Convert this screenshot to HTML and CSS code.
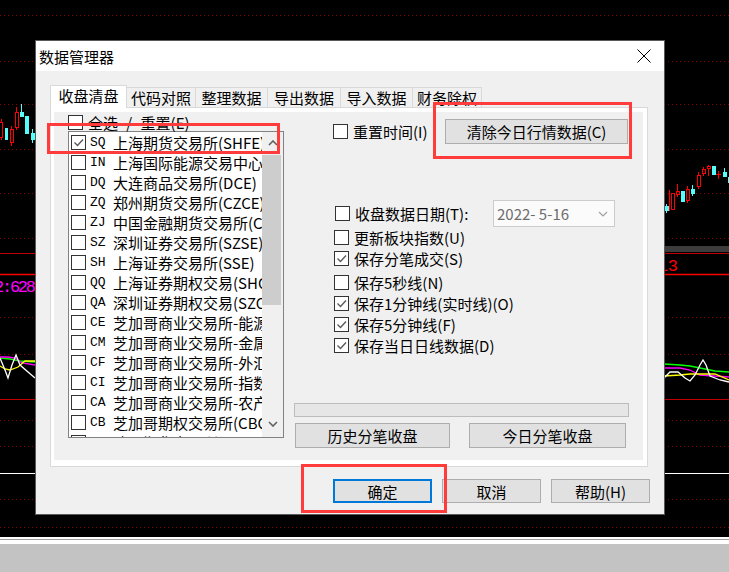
FILE: index.html
```html
<!DOCTYPE html>
<html lang="zh-CN">
<head>
  <meta charset="UTF-8">
  <title>数据管理器</title>
  <link rel="stylesheet" href="styles.css">
</head>
<body>
  <div class="screen">
    <svg class="chart" width="729" height="537" viewBox="0 0 729 537">
      <g class="grid">
        <line x1="0" y1="15.5" x2="729" y2="15.5"/>
        <line x1="0" y1="61.5" x2="729" y2="61.5"/>
        <line x1="0" y1="104.5" x2="729" y2="104.5"/>
        <line x1="0" y1="149.5" x2="729" y2="149.5"/>
        <line x1="0" y1="193.5" x2="729" y2="193.5"/>
        <line x1="0" y1="238.5" x2="729" y2="238.5"/>
        <line x1="0" y1="317.5" x2="729" y2="317.5"/>
        <line x1="0" y1="354.5" x2="729" y2="354.5"/>
        <line x1="0" y1="420.5" x2="729" y2="420.5"/>
        <line x1="0" y1="446.5" x2="729" y2="446.5"/>
        <line x1="0" y1="499.5" x2="729" y2="499.5"/>
        <line x1="0" y1="527.5" x2="729" y2="527.5"/>
      </g>
      <rect x="664" y="246" width="65" height="6" fill="#3c3c3c"/>
      <line x1="0" y1="253.5" x2="729" y2="253.5" stroke="#c00000"/>
      <line x1="0" y1="274.5" x2="729" y2="274.5" stroke="#ff0000" stroke-width="1.5"/>
      <line x1="0" y1="399.5" x2="729" y2="399.5" stroke="#c00000"/>
      <line x1="0" y1="473.5" x2="729" y2="473.5" stroke="#ffffff"/>
      <text x="-6" y="292" class="num" fill="#ff00ff" textLength="42">2:628</text>
      <text x="658" y="271" class="num" fill="#ff0000" textLength="20">13</text>

      <g class="up">
        <line x1="1.5" y1="119" x2="1.5" y2="140"/>
        <rect x="-0.5" y="122.5" width="3" height="15"/>
        <line x1="11.5" y1="126" x2="11.5" y2="146"/>
        <rect x="10.5" y="129.5" width="3" height="13"/>
        <line x1="16.5" y1="107" x2="16.5" y2="130"/>
        <rect x="15.5" y="112.5" width="3" height="15"/>
        <line x1="669.5" y1="190" x2="669.5" y2="211"/>
        <rect x="671.5" y="193.5" width="3" height="16"/>
        <line x1="677.5" y1="184" x2="677.5" y2="197"/>
        <rect x="676.5" y="191.5" width="3" height="3"/>
        <line x1="687.5" y1="186" x2="687.5" y2="203"/>
        <rect x="686.5" y="189.5" width="3" height="11"/>
        <line x1="698.5" y1="172" x2="698.5" y2="189"/>
        <rect x="697.5" y="175.5" width="3" height="11"/>
        <line x1="703.5" y1="167" x2="703.5" y2="176"/>
        <rect x="702.5" y="169.5" width="3" height="4"/>
        <line x1="708.5" y1="165" x2="708.5" y2="176"/>
        <rect x="707.5" y="166.5" width="3" height="2"/>
        <line x1="718.5" y1="171" x2="718.5" y2="179"/>
        <line x1="716" y1="174.5" x2="721" y2="174.5"/>
      </g>
      <g class="down">
        <rect x="5" y="128" width="3" height="12"/>
        <line x1="21.5" y1="104" x2="21.5" y2="116"/>
        <rect x="20" y="112" width="4" height="5"/>
        <rect x="25" y="116" width="4" height="18"/>
        <line x1="32.5" y1="129" x2="32.5" y2="143"/>
        <rect x="31" y="133" width="4" height="7"/>
        <line x1="666.5" y1="204" x2="666.5" y2="213"/>
        <rect x="665" y="206" width="4" height="5"/>
        <rect x="681" y="191" width="4" height="11"/>
        <line x1="692.5" y1="185" x2="692.5" y2="196"/>
        <rect x="691" y="189" width="4" height="5"/>
        <rect x="712" y="166" width="4" height="9"/>
        <line x1="724.5" y1="168" x2="724.5" y2="177"/>
        <rect x="723" y="172" width="4" height="5"/>
        <rect x="728" y="177" width="2" height="6"/>
      </g>

      <g class="ind">
        <polyline stroke="#00ff00" points="0,358 10,359 20,361 35,362"/>
        <polyline stroke="#ff00ff" points="0,357 8,357 15,358 22,363 35,365"/>
        <polyline stroke="#ffff00" points="0,366 5,369 10,370 18,367 25,361 35,361"/>
        <polyline stroke="#ffffff" points="0,358 5,370 8,378 12,365 16,355 20,365 28,372 35,378"/>
        <polyline stroke="#00ff00" points="664,364 680,365 690,366 700,368 715,371 729,372"/>
        <polyline stroke="#ff00ff" points="664,368 680,368 690,370 700,375 729,377"/>
        <polyline stroke="#ffff00" points="664,376 680,375 690,374 715,374 729,380"/>
        <polyline stroke="#ffffff" points="664,378 670,372 678,372 685,378 690,381 695,375 700,365 703,360 706,365 710,376 720,380 729,382"/>
      </g>
    </svg>
    <div class="statusbar"></div>
  </div>

  <div class="dialog">
    <div class="titlebar">
      <span class="title">数据管理器</span>
      <svg class="close" width="14" height="14" viewBox="0 0 14 14">
        <path d="M0.5 0.5 L13.5 13.5 M13.5 0.5 L0.5 13.5" stroke="#000" stroke-width="1" fill="none"/>
      </svg>
    </div>

    <div class="dlg-body">
      <div class="tabs">
        <div class="tab active t1">收盘清盘</div>
        <div class="tab t2">代码对照</div>
        <div class="tab t3">整理数据</div>
        <div class="tab t4">导出数据</div>
        <div class="tab t5">导入数据</div>
        <div class="tab t6">财务除权</div>
      </div>

      <div class="frame">
        <div class="page">
          <div class="col-left">
            <div class="selall"><span class="cb"></span><span class="selall-text">全选 / 重置(E)</span></div>
            <div class="listbox">
              <div class="items">
                <div class="row"><span class="cb"><svg viewBox="0 0 13 13"><path d="M2.5 6.5 L5.5 9.5 L11 3.5"/></svg></span><span class="code">SQ</span>上海期货交易所(SHFE)</div>
                <div class="row"><span class="cb"></span><span class="code">IN</span>上海国际能源交易中心</div>
                <div class="row"><span class="cb"></span><span class="code">DQ</span>大连商品交易所(DCE)</div>
                <div class="row"><span class="cb"></span><span class="code">ZQ</span>郑州期货交易所(CZCE)</div>
                <div class="row"><span class="cb"></span><span class="code">ZJ</span>中国金融期货交易所(CFFEX)</div>
                <div class="row"><span class="cb"></span><span class="code">SZ</span>深圳证券交易所(SZSE)</div>
                <div class="row"><span class="cb"></span><span class="code">SH</span>上海证券交易所(SSE)</div>
                <div class="row"><span class="cb"></span><span class="code">QQ</span>上海证券期权交易(SHOP)</div>
                <div class="row"><span class="cb"></span><span class="code">QA</span>深圳证券期权交易(SZOP)</div>
                <div class="row"><span class="cb"></span><span class="code">CE</span>芝加哥商业交易所-能源</div>
                <div class="row"><span class="cb"></span><span class="code">CM</span>芝加哥商业交易所-金属</div>
                <div class="row"><span class="cb"></span><span class="code">CF</span>芝加哥商业交易所-外汇</div>
                <div class="row"><span class="cb"></span><span class="code">CI</span>芝加哥商业交易所-指数</div>
                <div class="row"><span class="cb"></span><span class="code">CA</span>芝加哥商业交易所-农产品</div>
                <div class="row"><span class="cb"></span><span class="code">CB</span>芝加哥期权交易所(CBOE)</div>
                <div class="row"><span class="cb"></span><span class="code">EX</span>欧洲期货交易所(EUREX)</div>
              </div>
              <div class="scrollbar">
                <div class="arrow"><svg width="10" height="6" viewBox="0 0 10 6"><path d="M1 5 L5 1 L9 5"/></svg></div>
                <div class="thumb"></div>
                <div class="arrow bottom"><svg width="10" height="6" viewBox="0 0 10 6"><path d="M1 1 L5 5 L9 1"/></svg></div>
              </div>
            </div>
          </div>

          <div class="col-right">
            <div class="line first">
              <label class="opt"><span class="cb"></span>重置时间(I)</label>
              <div class="btn btn-clear">清除今日行情数据(C)</div>
            </div>
            <div class="line date-line">
              <label class="opt"><span class="cb"></span>收盘数据日期(T):</label>
              <div class="datefield">
                <span>2022- 5-16</span>
                <svg width="10" height="6" viewBox="0 0 10 6"><path d="M1 1 L5 5 L9 1"/></svg>
              </div>
            </div>
            <label class="opt item"><span class="cb"></span>更新板块指数(U)</label>
            <label class="opt item"><span class="cb"><svg viewBox="0 0 13 13"><path d="M2.5 6.5 L5.5 9.5 L11 3.5"/></svg></span>保存分笔成交(S)</label>
            <label class="opt item gap"><span class="cb"></span>保存5秒线(N)</label>
            <label class="opt item"><span class="cb"><svg viewBox="0 0 13 13"><path d="M2.5 6.5 L5.5 9.5 L11 3.5"/></svg></span>保存1分钟线(实时线)(O)</label>
            <label class="opt item"><span class="cb"><svg viewBox="0 0 13 13"><path d="M2.5 6.5 L5.5 9.5 L11 3.5"/></svg></span>保存5分钟线(F)</label>
            <label class="opt item"><span class="cb"><svg viewBox="0 0 13 13"><path d="M2.5 6.5 L5.5 9.5 L11 3.5"/></svg></span>保存当日日线数据(D)</label>
            <div class="progress"></div>
            <div class="line buttons">
              <div class="btn btn-hist">历史分笔收盘</div>
              <div class="btn btn-today">今日分笔收盘</div>
            </div>
          </div>
        </div>
      </div>

      <div class="actions">
        <div class="btn btn-ok">确定</div>
        <div class="btn">取消</div>
        <div class="btn">帮助(H)</div>
      </div>
    </div>

    <div class="mark mark-list"></div>
    <div class="mark mark-clear"></div>
    <div class="mark mark-ok"></div>
  </div>
</body>
</html>
```

FILE: styles.css
```css
body {
  margin: 0;
  width: 729px;
  height: 572px;
  overflow: hidden;
  position: relative;
  background: #000;
  font-family: "Noto Sans CJK SC", "Liberation Sans", sans-serif;
  font-size: 15px;
  color: #000;
}
.screen {
  display: flex;
  flex-direction: column;
}
.chart {
  display: block;
}
.grid line {
  stroke: #8a0000;
  stroke-dasharray: 1 3;
}
.up line, .up rect {
  stroke: #ff0000;
  fill: #000;
}
.down line {
  stroke: #54fcfc;
}
.down rect {
  fill: #54fcfc;
}
.ind polyline {
  fill: none;
  stroke-width: 1.3;
}
.num {
  font-family: "Liberation Mono", monospace;
  font-size: 17px;
}
.statusbar {
  height: 35px;
  background: linear-gradient(#fff 0 2px, #a0a0a0 2px 3px, #fff 3px 7px, #c3c3c3 7px);
}

/* dialog window */
.dialog {
  position: absolute;
  left: 35px;
  top: 40px;
  width: 630px;
  height: 475px;
  box-sizing: border-box;
  border: 1px solid #5a5a5a;
  background: #f0f0f0;
}
.titlebar {
  height: 30px;
  background: #fff;
  display: flex;
  align-items: center;
  justify-content: space-between;
  padding: 0 13px 0 3px;
}
.title {
  font-size: 15px;
  line-height: 1;
}
.dlg-body {
  padding: 14px 16px 0 14px;
}

/* tabs */
.tabs {
  display: flex;
  align-items: flex-end;
  height: 22px;
}
.tab {
  box-sizing: border-box;
  height: 20px;
  border: 1px solid #d9d9d9;
  border-bottom: none;
  background: #f0f0f0;
  margin-left: -1px;
  text-align: center;
  line-height: 20px;
  white-space: nowrap;
}
.tab.active {
  height: 23px;
  margin-bottom: -1px;
  margin-left: 0;
  background: #fff;
  line-height: 20px;
  position: relative;
  z-index: 1;
}
.t1 { width: 77px; }
.t2 { width: 70px; }
.t3 { width: 73px; }
.t4 { width: 74px; }
.t5 { width: 73px; }
.t6 { width: 70px; }

.frame {
  border: 1px solid #d9d9d9;
  background: #fff;
  padding: 4px 4px 6px 3px;
}
.page {
  height: 348px;
  background: #f0f0f0;
  display: flex;
  padding-left: 14px;
}

/* checkbox */
.cb {
  box-sizing: border-box;
  width: 15px;
  height: 15px;
  border: 1px solid #333;
  background: #fff;
  flex: none;
  display: flex;
}
.cb svg {
  width: 13px;
  height: 13px;
}
.cb path {
  fill: none;
  stroke: #5a5a5a;
  stroke-width: 1.4;
}

/* left column */
.col-left {
  width: 216px;
}
.selall {
  margin-top: 2px;
  height: 17px;
  display: flex;
  align-items: center;
  gap: 5px;
  line-height: 1;
}
.selall-text {
  word-spacing: 5px;
}
.listbox {
  box-sizing: border-box;
  height: 307px;
  border: 1px solid #828282;
  background: #fff;
  display: flex;
}
.items {
  width: 193px;
  overflow: hidden;
}
.row {
  height: 20px;
  display: flex;
  align-items: center;
  padding-left: 2px;
  white-space: nowrap;
  line-height: 1;
}
.row .cb {
  margin-right: 4px;
}
.code {
  width: 23px;
  flex: none;
  font-family: "Liberation Mono", monospace;
  font-size: 13px;
}
.scrollbar {
  width: 21px;
  background: #f0f0f0;
  display: flex;
  flex-direction: column;
}
.arrow {
  height: 22px;
  display: flex;
  align-items: center;
  justify-content: center;
}
.arrow path {
  fill: none;
  stroke: #606060;
  stroke-width: 1.6;
}
.arrow.bottom {
  margin-top: auto;
  height: 26px;
}
.thumb {
  margin-top: 1px;
  width: 19px;
  height: 150px;
  background: #cdcdcd;
}

/* right column */
.col-right {
  width: 335px;
  margin-left: 10px;
  display: flex;
  flex-direction: column;
}
.line {
  display: flex;
  align-items: center;
}
.line.first {
  margin-top: 7px;
  height: 24px;
  justify-content: space-between;
}
.line.first .opt {
  margin-left: 39px;
}
.opt {
  display: flex;
  align-items: center;
  gap: 5px;
  line-height: 1;
  white-space: nowrap;
}
.date-line {
  margin-top: 57px;
  height: 27px;
  justify-content: space-between;
}
.date-line .opt {
  margin-left: 41px;
}
.datefield {
  box-sizing: border-box;
  width: 122px;
  height: 27px;
  margin-right: 14px;
  border: 1px solid #cccccc;
  background: #fbfbfb;
  color: #6d6d6d;
  display: flex;
  align-items: center;
  justify-content: space-between;
  padding: 0 6px 0 3px;
  line-height: 1;
}
.datefield path {
  fill: none;
  stroke: #a0a0a0;
  stroke-width: 1.2;
}
.item {
  height: 21px;
  margin-left: 40px;
}
.item.gap {
  margin-top: 3px;
}
.progress {
  box-sizing: border-box;
  margin-top: 47px;
  height: 14px;
  border: 1px solid #bcbcbc;
  background: #e6e6e6;
}
.buttons {
  margin-top: 6px;
  justify-content: space-between;
}

/* buttons */
.btn {
  box-sizing: border-box;
  height: 25px;
  border: 1px solid #adadad;
  background: #e1e1e1;
  display: flex;
  align-items: center;
  justify-content: center;
  line-height: 1;
  white-space: nowrap;
}
.btn-clear {
  width: 183px;
  margin-right: 1px;
}
.btn-hist {
  width: 155px;
  margin-left: 1px;
}
.btn-today {
  width: 157px;
  margin-right: 3px;
}
.actions {
  margin-top: 12px;
  margin-right: -2px;
  display: flex;
  justify-content: flex-end;
  gap: 10px;
}
.actions .btn {
  width: 99px;
  height: 24px;
}
.actions .btn-ok {
  border: 2px solid #0078d7;
}

/* red annotation frames */
.mark {
  position: absolute;
  box-sizing: border-box;
  border: 3px solid #ff3b3b;
  z-index: 2;
}
.mark-list {
  left: 11px;
  top: 82px;
  width: 233px;
  height: 31px;
}
.mark-clear {
  left: 397px;
  top: 61px;
  width: 199px;
  height: 57px;
}
.mark-ok {
  left: 265px;
  top: 423px;
  width: 146px;
  height: 49px;
}
```
